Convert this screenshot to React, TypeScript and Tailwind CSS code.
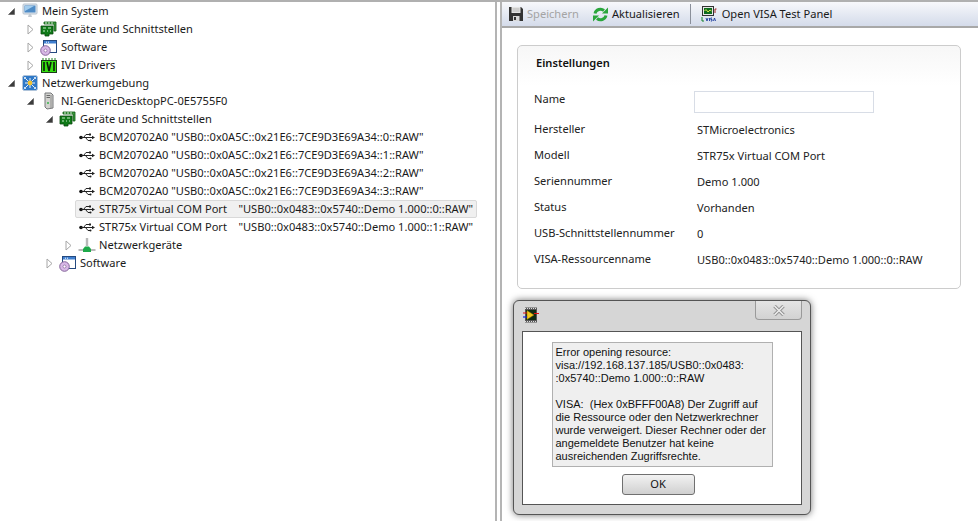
import React from 'react';

const font = "font-['Noto_Sans',sans-serif]";

const Expanded = () => (
  <svg width="9" height="9" viewBox="0 0 9 9" className="shrink-0">
    <path d="M7.5 1.5V7.5H1.5Z" fill="#3c3c3c" stroke="#555" strokeWidth="0.6" />
  </svg>
);

const Collapsed = () => (
  <svg width="9" height="11" viewBox="0 0 9 11" className="shrink-0">
    <path d="M2 1V10L7 5.5Z" fill="#fff" stroke="#a6a6a6" />
  </svg>
);

const BoardIcon = () => (
  <svg width="17" height="16" viewBox="0 0 17 16" className="shrink-0">
    <path d="M4 1H16V10H14V3H4Z" fill="#3f9a3f" stroke="#0d5a12" strokeWidth="0.8" />
    <path d="M1 5H13V13H9V15H5V13H1Z" fill="#0f7a18" stroke="#0b4a0f" strokeWidth="0.8" />
    <path d="M3 7H6M8 7H11M3 10H5M7 10H8M10 10H11" stroke="#c8eac8" strokeWidth="1.2" />
    <path d="M6 1V3M9 1V3M12 1V3" stroke="#d3eed3" strokeWidth="1" />
  </svg>
);

const SoftwareIcon = () => (
  <svg width="17" height="17" viewBox="0 0 17 17" className="shrink-0">
    <rect x="3.5" y="1.5" width="13" height="12" fill="#fff" stroke="#24497f" />
    <rect x="4" y="2" width="12" height="2.5" fill="#3f7fd0" />
    <path d="M6 3.2H7M8 3.2H9" stroke="#fff" />
    <circle cx="5.5" cy="11.5" r="4.8" fill="#d8b8e6" stroke="#85669a" />
    <circle cx="5.5" cy="11.5" r="1.5" fill="#fff" stroke="#85669a" strokeWidth="0.7" />
  </svg>
);

const IviIcon = () => (
  <svg width="16" height="16" viewBox="0 0 16 16" className="shrink-0">
    <rect x="0.5" y="3.5" width="15" height="12" fill="#35e010" stroke="#1c3a1c" />
    <path d="M1 2H15" stroke="#8fbf8f" strokeWidth="2" strokeDasharray="2 1" />
    <path d="M3 5V14M6 5L8 14L10 5M13 5V14" stroke="#0c1c0c" strokeWidth="1.6" fill="none" />
  </svg>
);

const MonitorIcon = () => (
  <svg width="16" height="16" viewBox="0 0 16 16" className="shrink-0">
    <rect x="1" y="1" width="14" height="10" rx="1" fill="#dfe6ee" stroke="#b6c2ce" />
    <rect x="2.5" y="2.5" width="11" height="7" fill="#4f8cc6" />
    <path d="M3 3H12L3 8Z" fill="#a3cdee" />
    <path d="M7 11H9L10 14H6Z" fill="#c6ccd2" />
  </svg>
);

const NetworkIcon = () => (
  <svg width="16" height="16" viewBox="0 0 16 16" className="shrink-0">
    <rect x="0.5" y="0.5" width="15" height="15" rx="2" fill="#2f79c7" stroke="#b0c4da" />
    <path d="M8 3V13M3 8H13M4 4L12 12M12 4L4 12" stroke="#e9f2fb" strokeWidth="1" />
    <circle cx="8" cy="8" r="2.4" fill="#f0c030" />
    <circle cx="3" cy="3" r="1" fill="#fff" />
    <circle cx="13" cy="3" r="1" fill="#fff" />
    <circle cx="3" cy="13" r="1" fill="#fff" />
    <circle cx="13" cy="13" r="1" fill="#fff" />
  </svg>
);

const TowerIcon = () => (
  <svg width="13" height="18" viewBox="0 0 13 18" className="shrink-0">
    <path d="M3 1H9L11 3V16L5 17L3 15Z" fill="#d2d2cf" stroke="#77787a" />
    <path d="M9 3V16" stroke="#8c8c8c" />
    <path d="M4.5 3.5H8M4.5 5.5H8" stroke="#6a6a6a" />
    <path d="M5 11H7" stroke="#37b34a" strokeWidth="1.6" />
  </svg>
);

const UsbIcon = () => (
  <svg width="16" height="9" viewBox="0 0 16 9" className="shrink-0">
    <circle cx="2" cy="4.5" r="1.8" fill="#111" />
    <path d="M2 4.5H13.5M4.5 4.5L7 1.5H10M6.5 4.5L9 7.5H11" stroke="#222" strokeWidth="1" fill="none" />
    <path d="M13 2.8L16 4.5L13 6.2Z" fill="#222" />
    <rect x="10" y="0.5" width="2" height="2" fill="#222" />
    <circle cx="11.5" cy="7.5" r="1" fill="#222" />
  </svg>
);

const LanIcon = () => (
  <svg width="18" height="15" viewBox="0 0 18 15" className="shrink-0">
    <path d="M9 0V8" stroke="#b9b9b9" strokeWidth="2.4" />
    <path d="M0.5 12H17.5" stroke="#a9a9a9" strokeWidth="1.6" />
    <path d="M5 14V11L7 8.5H11L13 11V14Z" fill="#1ea94a" />
  </svg>
);

const SaveIcon = () => (
  <svg width="16" height="16" viewBox="0 0 16 16" className="shrink-0">
    <path d="M1 1H13L15 3V15H1Z" fill="#333" />
    <rect x="3.5" y="1" width="9" height="6" fill="#e4e4e4" />
    <path d="M4.5 3H11.5M4.5 5H11.5" stroke="#aaa" strokeWidth="0.8" />
    <rect x="5" y="10" width="6.5" height="5" fill="#d8d8d8" />
    <rect x="6" y="11" width="2" height="3" fill="#333" />
  </svg>
);

const RefreshIcon = () => (
  <svg width="17" height="17" viewBox="0 0 17 17" className="shrink-0">
    <path d="M3 7.5A5.6 5.6 0 0 1 12 4.5" stroke="#2aa63c" strokeWidth="3" fill="none" />
    <path d="M10 7.5H16V1.5Z" fill="#2aa63c" />
    <path d="M14 9.5A5.6 5.6 0 0 1 5 12.5" stroke="#2aa63c" strokeWidth="3" fill="none" />
    <path d="M7 9.5H1V15.5Z" fill="#2aa63c" />
  </svg>
);

const VisaIcon = () => (
  <svg width="17" height="17" viewBox="0 0 17 17" className="shrink-0">
    <rect x="1.5" y="0.5" width="11" height="9" fill="#e8e8e8" stroke="#333" />
    <rect x="3" y="2" width="8" height="6" fill="#0e6b1e" />
    <path d="M3.5 5L5 3.5L7 6L9 4L10.5 5" stroke="#d8e84a" fill="none" />
    <path d="M14 7V3H15.5" stroke="#a02020" fill="none" />
    <path d="M1 11V15H3" stroke="#12802a" fill="none" />
    <path d="M5 12L6 15L7 12M8.5 12V15M11 12H9.8V13.5H11V15H9.8M12.5 15L13.5 12L14.5 15" stroke="#1a3a9c" strokeWidth="0.9" fill="none" />
  </svg>
);

const LabviewIcon = () => (
  <svg width="16" height="16" viewBox="0 0 16 16" className="shrink-0">
    <rect x="2" y="0.5" width="12" height="15" fill="#555" />
    <path d="M2 1.5H14M2 14.5H14" stroke="#ddd" strokeDasharray="1 1" />
    <rect x="3" y="3" width="10" height="10" fill="#0f2c14" />
    <path d="M4 3.5V12.5L11 8Z" fill="#f2c81e" stroke="#8a6a00" strokeWidth="0.5" />
    <path d="M0 6H4M11 6.5H16" stroke="#e01010" strokeWidth="1.2" />
    <path d="M0 10H4" stroke="#1020e0" strokeWidth="1.2" />
  </svg>
);

const CloseGlyph = () => (
  <svg width="12" height="11" viewBox="0 0 12 11">
    <path d="M1.5 1L10.5 10M10.5 1L1.5 10" stroke="#8f8f8f" strokeWidth="3.4" />
    <path d="M1.5 1L10.5 10M10.5 1L1.5 10" stroke="#ececec" strokeWidth="1.6" />
  </svg>
);

type TreeRowProps = {
  indent: string;
  toggle?: 'open' | 'closed';
  icon: React.ReactNode;
  label: string;
  selected?: boolean;
};

// toggle column is 9px wide so labels line up whether or not there is an arrow
const TreeRow = ({ indent, toggle, icon, label, selected }: TreeRowProps) => (
  <div className={`flex h-[18px] items-center ${indent}`}>
    <span className="flex w-[9px] justify-center">
      {toggle === 'open' && <Expanded />}
      {toggle === 'closed' && <Collapsed />}
    </span>
    <div
      className={`ml-[2px] flex h-[18px] items-center whitespace-pre rounded-[2px] border pr-[3px] ${
        selected ? 'border-[#d9d9d9] bg-[#f0f0f0]' : 'border-transparent'
      }`}
    >
      <span className="ml-[2px] mr-[4px] flex w-[17px] justify-center">{icon}</span>
      <span className="text-[#1a1a1a]">{label}</span>
    </div>
  </div>
);

const usbRows = [
  { label: 'BCM20702A0 "USB0::0x0A5C::0x21E6::7CE9D3E69A34::0::RAW"' },
  { label: 'BCM20702A0 "USB0::0x0A5C::0x21E6::7CE9D3E69A34::1::RAW"' },
  { label: 'BCM20702A0 "USB0::0x0A5C::0x21E6::7CE9D3E69A34::2::RAW"' },
  { label: 'BCM20702A0 "USB0::0x0A5C::0x21E6::7CE9D3E69A34::3::RAW"' },
  { label: 'STR75x Virtual COM Port    "USB0::0x0483::0x5740::Demo 1.000::0::RAW"', selected: true },
  { label: 'STR75x Virtual COM Port    "USB0::0x0483::0x5740::Demo 1.000::1::RAW"' },
];

const settings = [
  ['Hersteller', 'STMicroelectronics'],
  ['Modell', 'STR75x Virtual COM Port'],
  ['Seriennummer', 'Demo 1.000'],
  ['Status', 'Vorhanden'],
  ['USB-Schnittstellennummer', '0'],
  ['VISA-Ressourcenname', 'USB0::0x0483::0x5740::Demo 1.000::0::RAW'],
];

export default function App() {
  return (
    <div className={`relative flex h-[521px] w-[978px] overflow-hidden border-t-2 border-[#b0b0b0] bg-white text-[11.1px] ${font}`}>
      {/* Tree */}
      <div className="w-[497px] shrink-0 border-r-2 border-[#b4b4b4]">
        <TreeRow indent="pl-[7px]" toggle="open" icon={<MonitorIcon />} label="Mein System" />
        <TreeRow indent="pl-[26px]" toggle="closed" icon={<BoardIcon />} label="Geräte und Schnittstellen" />
        <TreeRow indent="pl-[26px]" toggle="closed" icon={<SoftwareIcon />} label="Software" />
        <TreeRow indent="pl-[26px]" toggle="closed" icon={<IviIcon />} label="IVI Drivers" />
        <TreeRow indent="pl-[7px]" toggle="open" icon={<NetworkIcon />} label="Netzwerkumgebung" />
        <TreeRow indent="pl-[26px]" toggle="open" icon={<TowerIcon />} label="NI-GenericDesktopPC-0E5755F0" />
        <TreeRow indent="pl-[45px]" toggle="open" icon={<BoardIcon />} label="Geräte und Schnittstellen" />
        {usbRows.map((row) => (
          <TreeRow key={row.label} indent="pl-[64px]" icon={<UsbIcon />} label={row.label} selected={row.selected} />
        ))}
        <TreeRow indent="pl-[64px]" toggle="closed" icon={<LanIcon />} label="Netzwerkgeräte" />
        <TreeRow indent="pl-[45px]" toggle="closed" icon={<SoftwareIcon />} label="Software" />
      </div>

      {/* Right pane */}
      <div className="ml-[3px] flex-1 border-l-2 border-[#b4b4b4]">
        <div className="flex h-[26px] items-center border-b-2 border-[#a8a8a8] bg-gradient-to-b from-[#f7f8fb] to-[#d4dbea] pl-[6px]">
          <SaveIcon />
          <span className="ml-[3px] text-[#a4a4a4]">Speichern</span>
          <span className="ml-[13px]"><RefreshIcon /></span>
          <span className="ml-[3px] text-[#1a1a1a]">Aktualisieren</span>
          <span className="ml-[10px] mr-[10px] h-[20px] w-px bg-[#8a8f9a]" />
          <VisaIcon />
          <span className="ml-[4px] text-[#1a1a1a]">Open VISA Test Panel</span>
        </div>

        <div className="ml-[15px] mt-[17px] h-[244px] w-[444px] rounded-[5px] border border-[#cccccc] bg-gradient-to-b from-[#f7f7f7] to-white to-[40px] pl-[16px] pt-[8px] text-[#222]">
          <div className="ml-[2px] font-semibold leading-[18px] text-[#111]">Einstellungen</div>
          <div className="mt-[19px] grid grid-cols-[163px_1fr] items-center">
            <span className="-mt-[6px] h-[24px] leading-[20px]">Name</span>
            <div className="-ml-[3px] mb-[3px] h-[22px] w-[180px] border border-[#d8dde6] bg-white" />
            {settings.map(([name, value]) => (
              <React.Fragment key={name}>
                <span className="h-[26px] leading-[26px]">{name}</span>
                <span className="h-[26px] leading-[28px]">{value}</span>
              </React.Fragment>
            ))}
          </div>
        </div>
      </div>

      {/* Error dialog, floats over the right pane */}
      <div className="absolute left-[513px] top-[298px] flex h-[215px] w-[298px] flex-col rounded-[6px] border border-[#555] bg-[#d6d6d6] px-[8px] pb-[9px] shadow-[0_0_7px_rgba(0,0,0,0.55)]">
        <div className="flex h-[30px] shrink-0 items-start">
          <span className="ml-[1px] mt-[6px]"><LabviewIcon /></span>
          <div className="ml-auto flex h-[19px] w-[47px] items-center justify-center rounded-b-[4px] border border-t-0 border-[#9a9a9a] bg-gradient-to-b from-[#e4e4e4] to-[#d2d2d2]">
            <CloseGlyph />
          </div>
        </div>
        <div className="flex flex-1 flex-col items-center border border-[#555] bg-white pt-[10px]">
          <div className="h-[125px] w-[221px] whitespace-pre border border-[#b0b0b0] bg-[#efefef] px-[3px] pt-[3px] font-['Liberation_Sans',sans-serif] text-[11px] leading-[13px] text-[#111]">
            {'Error opening resource:\nvisa://192.168.137.185/USB0::0x0483:\n:0x5740::Demo 1.000::0::RAW\n\nVISA:  (Hex 0xBFFF00A8) Der Zugriff auf\ndie Ressource oder den Netzwerkrechner\nwurde verweigert. Dieser Rechner oder der\nangemeldete Benutzer hat keine\nausreichenden Zugriffsrechte.'}
          </div>
          <div className="mr-[8px] mt-[7px] flex h-[21px] w-[73px] items-center justify-center rounded-[3px] border border-[#707070] bg-gradient-to-b from-[#f2f2f2] to-[#d0d0d0] text-[#111]">
            OK
          </div>
        </div>
      </div>
    </div>
  );
}
